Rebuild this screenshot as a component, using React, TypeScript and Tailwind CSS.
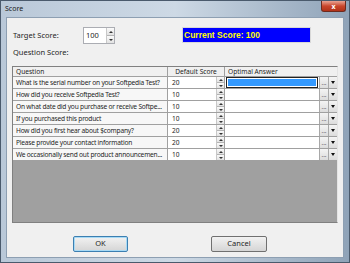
import React from "react";

const QUESTIONS = [
  { text: "What is the serial number on your Softpedia Test?", score: 20 },
  { text: "How did you receive Softpedia Test?", score: 10 },
  { text: "On what date did you purchase or receive Softpe...", score: 10 },
  { text: "If you purchased this product", score: 10 },
  { text: "How did you first hear about $company?", score: 20 },
  { text: "Please provide your contact information", score: 20 },
  { text: "We occasionally send out product announcemen...", score: 10 },
];

function Spinner() {
  return (
    <div className="flex flex-col w-[8px] h-full border-l border-[#c8c8c8]">
      <div className="flex-1 flex items-center justify-center bg-gradient-to-b from-[#fafafa] to-[#e2e2e2] border-b border-[#b5b5b5]">
        <div className="w-0 h-0 border-l-[2px] border-r-[2px] border-b-[2px] border-l-transparent border-r-transparent border-b-[#333]" />
      </div>
      <div className="flex-1 flex items-center justify-center bg-gradient-to-b from-[#fafafa] to-[#e2e2e2]">
        <div className="w-0 h-0 border-l-[2px] border-r-[2px] border-t-[2px] border-l-transparent border-r-transparent border-t-[#333]" />
      </div>
    </div>
  );
}

function Row({ text, score, first }: { text: string; score: number; first: boolean }) {
  return (
    <div className="flex h-[12px] border-b border-[#a0a0a0]">
      <div className="w-[155px] shrink-0 bg-[#f7f7f7] border-r border-[#a0a0a0] pl-[3px] leading-[11px] whitespace-nowrap overflow-hidden tracking-[-0.2px]">
        {text}
      </div>
      <div className="w-[57px] shrink-0 bg-white border-r border-[#a0a0a0] flex items-center">
        <div className="flex-1 pl-[4px]">{score}</div>
        <Spinner />
      </div>
      <div className="flex-1 bg-white flex items-center">
        <div className="flex-1 h-full flex items-center px-[1px]">
          {first && (
            <div className="flex-1 h-full border border-[#222] p-[1px]">
              <div className="w-full h-full bg-[#3399ff]" />
            </div>
          )}
        </div>
        <div className="w-[9px] h-full bg-gradient-to-b from-[#f4f4f4] to-[#dcdcdc] border-l border-[#a8a8a8] flex items-center justify-center text-[6px] leading-none text-[#333]">
          ...
        </div>
        <div className="w-[9px] h-full bg-gradient-to-b from-[#f4f4f4] to-[#dcdcdc] border-l border-[#a8a8a8] flex items-center justify-center">
          <div className="w-0 h-0 border-l-[2px] border-r-[2px] border-t-[3px] border-l-transparent border-r-transparent border-t-[#111]" />
        </div>
      </div>
    </div>
  );
}

export default function App() {
  return (
    <div
      className="w-[350px] h-[263px] flex flex-col overflow-hidden bg-gradient-to-r from-[#b9c8d8] via-[#cdd9e5] to-[#8fa3b8] border border-[#4a5a6c]"
      style={{ fontFamily: '"Noto Sans", "Open Sans", sans-serif' }}
    >
      <div className="h-[16px] flex items-start justify-between">
        <div className="pl-[4px] pt-[3px] text-[7px] text-[#1a1a1a]">Score</div>
        <div className="w-[25px] h-[11px] mr-[3px] rounded-b-[3px] bg-gradient-to-b from-[#e8a393] via-[#c9462c] to-[#b13218] border border-[#6d2a1e] border-t-0 flex items-center justify-center text-white text-[7px] font-bold leading-none">
          x
        </div>
      </div>
      <div className="flex-1 mx-[5px] mb-[4px] bg-[#f0f0f0] border border-[#8d9fb2] flex flex-col text-[6.6px] text-[#1e1e1e]">
        <div className="flex pl-[6px] pt-[9px]">
          <div className="flex flex-col">
            <div className="flex items-center h-[17px]">
              <div className="w-[70px] text-[7.5px]">Target Score:</div>
              <div className="flex h-[17px] w-[32px] bg-white border border-[#abadb3]">
                <div className="flex-1 pl-[2px] flex items-center text-[7.5px]">100</div>
                <Spinner />
              </div>
            </div>
            <div className="h-[17px] flex items-center text-[7.5px]">Question Score:</div>
          </div>
          <div
            className="ml-[67px] w-[129px] h-[16px] bg-[#0000ff] border border-[#d8d8d8] flex items-center pl-[1px] text-[#ffff00] font-bold text-[8.5px]"
            style={{ fontFamily: '"Liberation Sans", Arial, sans-serif' }}
          >
            Current Score: 100
          </div>
        </div>
        <div className="mx-[5px] mt-[5px] h-[157px] bg-[#a0a0a0] border border-[#808080] border-r-[#e4e4e4] flex flex-col">
          <div className="flex h-[10px] bg-[#f0f0f0] border-b border-[#a0a0a0]">
            <div className="w-[155px] shrink-0 border-r border-[#a0a0a0] pl-[3px] flex items-center">Question</div>
            <div className="w-[57px] shrink-0 border-r border-[#a0a0a0] flex items-center justify-center">Default Score</div>
            <div className="flex-1 pl-[3px] flex items-center">Optimal Answer</div>
          </div>
          {QUESTIONS.map((q, i) => (
            <Row key={i} text={q.text} score={q.score} first={i === 0} />
          ))}
        </div>
        <div className="flex mt-[13px] text-[7.5px]">
          <div className="ml-[66px] w-[55px] h-[16px] rounded-[2px] border border-[#3c7fb1] bg-gradient-to-b from-[#f2f2f2] to-[#d5d5d5] shadow-[inset_0_0_0_1px_#a8daf5] flex items-center justify-center">
            OK
          </div>
          <div className="ml-[83px] w-[56px] h-[16px] rounded-[2px] border border-[#707070] bg-gradient-to-b from-[#f2f2f2] to-[#d5d5d5] flex items-center justify-center">
            Cancel
          </div>
        </div>
      </div>
    </div>
  );
}
